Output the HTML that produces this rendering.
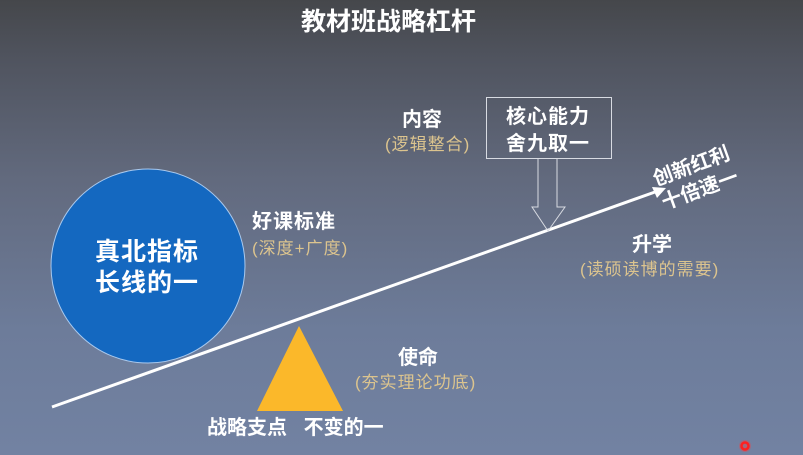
<!DOCTYPE html>
<html><head><meta charset="utf-8"><style>
body{margin:0;width:803px;height:455px;overflow:hidden;background:linear-gradient(#45474b 0px,#50545f 60px,#626a7e 180px,#6d7c9a 330px,#7282a2 455px);font-family:"Liberation Sans","Noto Sans CJK SC",sans-serif;position:relative}
.t{position:absolute;color:#fff;white-space:nowrap;line-height:1;font-weight:bold;font-size:20px}
.g{position:absolute;color:#dcc48e;white-space:nowrap;font-size:17px;letter-spacing:1px;line-height:1}
</style></head><body>
<svg width="803" height="455" style="position:absolute;left:0;top:0">
<circle cx="148" cy="266" r="97" fill="#1468c0" stroke="#a9c9ee" stroke-width="1"/>
<line x1="52" y1="407" x2="655" y2="192" stroke="#fff" stroke-width="3"/>
<polygon points="666,188 652,187 657,198" fill="#fff"/>
<polygon points="299,326 257,411 343,411" fill="#fbb82a"/>
<rect x="486.5" y="97.5" width="125" height="61" fill="none" stroke="#d8dbe2" stroke-width="1"/>
<polygon points="538,158.5 557,158.5 557,207 565,207 548,231 532,207 538,207" fill="none" stroke="#d8dbe2" stroke-width="1"/>
<circle cx="745" cy="446" r="6" fill="rgba(255,60,60,0.35)"/>
<circle cx="745" cy="446" r="3.5" fill="none" stroke="#ff2020" stroke-width="2.5"/>
</svg>
<div class="t" style="left:301px;top:10px;font-size:25px">教材班战略杠杆</div>
<div class="t" style="left:95px;top:240px;font-size:25px;letter-spacing:1px">真北指标</div>
<div class="t" style="left:95px;top:271px;font-size:25px;letter-spacing:1px">长线的一</div>
<div class="t" style="left:252px;top:212px;letter-spacing:1px">好课标准</div>
<div class="g" style="left:252px;top:240px">(深度+广度)</div>
<div class="t" style="left:398px;top:348px">使命</div>
<div class="g" style="left:355px;top:374px">(夯实理论功底)</div>
<div class="t" style="left:207px;top:418px">战略支点&nbsp;&nbsp;&nbsp;不变的一</div>
<div class="t" style="left:402px;top:110px">内容</div>
<div class="g" style="left:385px;top:136px">(逻辑整合)</div>
<div class="t" style="left:506px;top:107px;letter-spacing:1px">核心能力</div>
<div class="t" style="left:506px;top:134px;letter-spacing:1px">舍九取一</div>
<div class="t" style="left:632px;top:235px">升学</div>
<div class="g" style="left:580px;top:261px">(读硕读博的需要)</div>
<div class="t" style="left:656px;top:154px;transform:rotate(-20deg);transform-origin:center;text-align:center;line-height:25px">创新红利<br>十倍速一</div>
</body></html>
